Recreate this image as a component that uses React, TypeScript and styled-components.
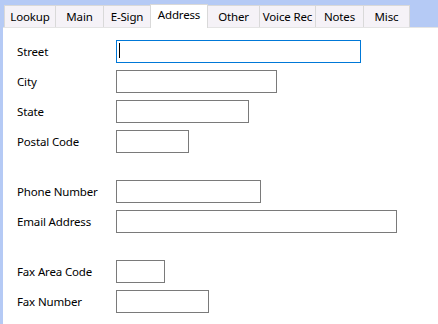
import React from 'react';
import styled, { createGlobalStyle } from 'styled-components';

const GlobalStyle = createGlobalStyle`
  html, body {
    margin: 0;
    padding: 0;
    background: #b5caf5;
  }
  body {
    font-family: 'Segoe UI', 'Noto Sans', 'Open Sans', sans-serif;
    font-size: 11.5px;
    letter-spacing: -0.15px;
    color: #000;
  }
`;

const Frame = styled.div`
  width: 438px;
  height: 324px;
  display: flex;
  flex-direction: column;
  background: #b5caf5;
  padding-left: 3px;
  box-sizing: border-box;
  overflow: hidden;
`;

const TabStrip = styled.div`
  display: flex;
  align-items: flex-end;
  height: 27px;
  padding-left: 1px;
`;

const Tab = styled.div<{ $width: number; $active?: boolean }>`
  width: ${(p) => p.$width}px;
  height: ${(p) => (p.$active ? 24 : 22)}px;
  margin: ${(p) => (p.$active ? '0 0 -1px -1px' : '0')};
  position: relative;
  z-index: ${(p) => (p.$active ? 1 : 0)};
  box-sizing: border-box;
  display: flex;
  align-items: flex-start;
  justify-content: center;
  padding-top: ${(p) => (p.$active ? 2 : 3)}px;
  background: ${(p) => (p.$active ? '#fff' : '#f5f2f7')};
  border: 1px solid #d9d9d9;
  border-bottom: none;
  border-left-width: ${(p) => (p.$active ? 1 : 0)}px;
  &:first-child {
    border-left-width: 1px;
  }
  white-space: nowrap;
  line-height: 16px;
`;

const Panel = styled.div`
  flex: 1;
  background: #fff;
  border-top: 1px solid #e4e4e4;
  padding: 12px 0 0 14px;
  display: flex;
  flex-direction: column;
  gap: 27px;
`;

const Group = styled.div`
  display: flex;
  flex-direction: column;
  gap: 7px;
`;

const Row = styled.div`
  display: grid;
  grid-template-columns: 99px auto;
  align-items: center;
  height: 23px;
`;

const Label = styled.label`
  line-height: 16px;
  white-space: nowrap;
`;

const FieldWrap = styled.div`
  position: relative;
  display: flex;
`;

const TextBox = styled.input<{ $width: number; $focused?: boolean }>`
  width: ${(p) => p.$width}px;
  height: 23px;
  box-sizing: border-box;
  margin: 0;
  padding: 0 2px;
  border: 1px solid ${(p) => (p.$focused ? '#0078d7' : '#7a7a7a')};
  border-radius: 0;
  background: #fff;
  font: inherit;
  outline: none;
  caret-color: transparent;
`;

const Caret = styled.span`
  position: absolute;
  left: 3px;
  top: 3px;
  width: 1px;
  height: 15px;
  background: #000;
`;

const tabs = [
  { label: 'Lookup', width: 52 },
  { label: 'Main', width: 48 },
  { label: 'E-Sign', width: 47 },
  { label: 'Address', width: 58, active: true },
  { label: 'Other', width: 52 },
  { label: 'Voice Rec', width: 56 },
  { label: 'Notes', width: 48 },
  { label: 'Misc', width: 46 },
];

type Field = { label: string; width: number; focused?: boolean };

const groups: Field[][] = [
  [
    { label: 'Street', width: 245, focused: true },
    { label: 'City', width: 161 },
    { label: 'State', width: 133 },
    { label: 'Postal Code', width: 73 },
  ],
  [
    { label: 'Phone Number', width: 145 },
    { label: 'Email Address', width: 281 },
  ],
  [
    { label: 'Fax Area Code', width: 49 },
    { label: 'Fax Number', width: 93 },
  ],
];

const App = () => {
  return (
    <>
      <GlobalStyle />
      <Frame>
        <TabStrip>
          {tabs.map((t) => (
            <Tab key={t.label} $width={t.width} $active={t.active}>
              {t.label}
            </Tab>
          ))}
        </TabStrip>
        <Panel>
          {groups.map((group, i) => (
            <Group key={i}>
              {group.map((f) => (
                <Row key={f.label}>
                  <Label>{f.label}</Label>
                  <FieldWrap>
                    <TextBox type="text" $width={f.width} $focused={f.focused} readOnly />
                    {f.focused && <Caret />}
                  </FieldWrap>
                </Row>
              ))}
            </Group>
          ))}
        </Panel>
      </Frame>
    </>
  );
};

export default App;
